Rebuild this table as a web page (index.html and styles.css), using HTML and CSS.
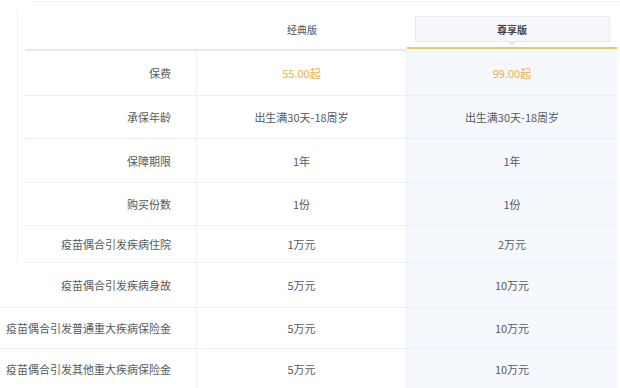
FILE: index.html
```html
<!DOCTYPE html>
<html>

<head>
  <meta charset="utf-8">
  <title>保障对比</title>
  <link rel="stylesheet" href="styles.css">
</head>

<body>
  <main class="compare">
    <div class="top-rule"></div>

    <div class="panel">
      <div class="head">
        <div class="head-cell"></div>
        <div class="head-cell">经典版</div>
        <div class="head-cell head-premium">
          <div class="tab">尊享版</div>
        </div>
      </div>

      <div class="row row-tall">
        <div class="label">保费</div>
        <div class="value price">55.00起</div>
        <div class="value premium price">99.00起</div>
      </div>
      <div class="row">
        <div class="label">承保年龄</div>
        <div class="value">出生满30天-18周岁</div>
        <div class="value premium">出生满30天-18周岁</div>
      </div>
      <div class="row row-mid">
        <div class="label">保障期限</div>
        <div class="value">1年</div>
        <div class="value premium">1年</div>
      </div>
      <div class="row">
        <div class="label">购买份数</div>
        <div class="value">1份</div>
        <div class="value premium">1份</div>
      </div>
      <div class="row row-short">
        <div class="label">疫苗偶合引发疾病住院</div>
        <div class="value">1万元</div>
        <div class="value premium">2万元</div>
      </div>
    </div>

    <div class="lower">
      <div class="row row-tall">
        <div class="label">疫苗偶合引发疾病身故</div>
        <div class="value">5万元</div>
        <div class="value premium">10万元</div>
      </div>
      <div class="row row-low">
        <div class="label">疫苗偶合引发普通重大疾病保险金</div>
        <div class="value">5万元</div>
        <div class="value premium">10万元</div>
      </div>
      <div class="row row-low">
        <div class="label">疫苗偶合引发其他重大疾病保险金</div>
        <div class="value">5万元</div>
        <div class="value premium">10万元</div>
      </div>
    </div>
  </main>
</body>

</html>
```

FILE: styles.css
```css
body {
  margin: 0;
  background-color: white;
  font-family: "Noto Sans CJK SC", "Noto Sans", sans-serif;
  font-size: 11px;
  color: #555a60;
}

.compare {
  width: 620px;
}

.top-rule {
  margin-left: 30px;
  margin-top: 1px;
  border-top: 1px solid #f1f3f6;
}

.panel {
  margin-left: 17px;
  margin-top: 8px;
  padding-left: 7px;
  border-left: 1px solid #eceff3;
}

.head,
.panel .row {
  display: grid;
  grid-template-columns: 172px 210px 210px;
}

.lower .row {
  display: grid;
  grid-template-columns: 197px 210px 210px;
}

.head-cell {
  height: 39px;
  border-bottom: 2px solid #e1e9f4;
  display: flex;
  align-items: center;
  justify-content: center;
  font-size: 10px;
  color: #50555c;
}

.head-premium {
  border-bottom-color: #f2c35c;
  align-items: flex-start;
  padding-top: 6px;
  box-sizing: border-box;
}

.tab {
  position: relative;
  width: 195px;
  height: 26px;
  box-sizing: border-box;
  border: 1px solid #e6ebf2;
  background-color: #f6f8fc;
  display: flex;
  align-items: center;
  justify-content: center;
  font-weight: bold;
  color: #3f444a;
}

.tab::after {
  content: "";
  position: absolute;
  left: 50%;
  bottom: -5px;
  margin-left: -4px;
  border-left: 4px solid transparent;
  border-right: 4px solid transparent;
  border-top: 4px solid #e6ebf2;
}

.row {
  height: 43px;
}

.row-tall {
  height: 45px;
}

.row-mid {
  height: 44px;
}

.row-short {
  height: 37px;
}

.row-low {
  height: 41px;
}

.label,
.value {
  display: flex;
  align-items: center;
  border-bottom: 1px solid #ebeff6;
  border-right: 1px solid #eef1f6;
}

.label {
  justify-content: flex-end;
  padding-right: 25px;
  box-sizing: border-box;
}

.value {
  justify-content: center;
}

.premium {
  background-color: #f5f8fd;
  border-right: none;
}

.price {
  color: #f5ac4c;
}
```
